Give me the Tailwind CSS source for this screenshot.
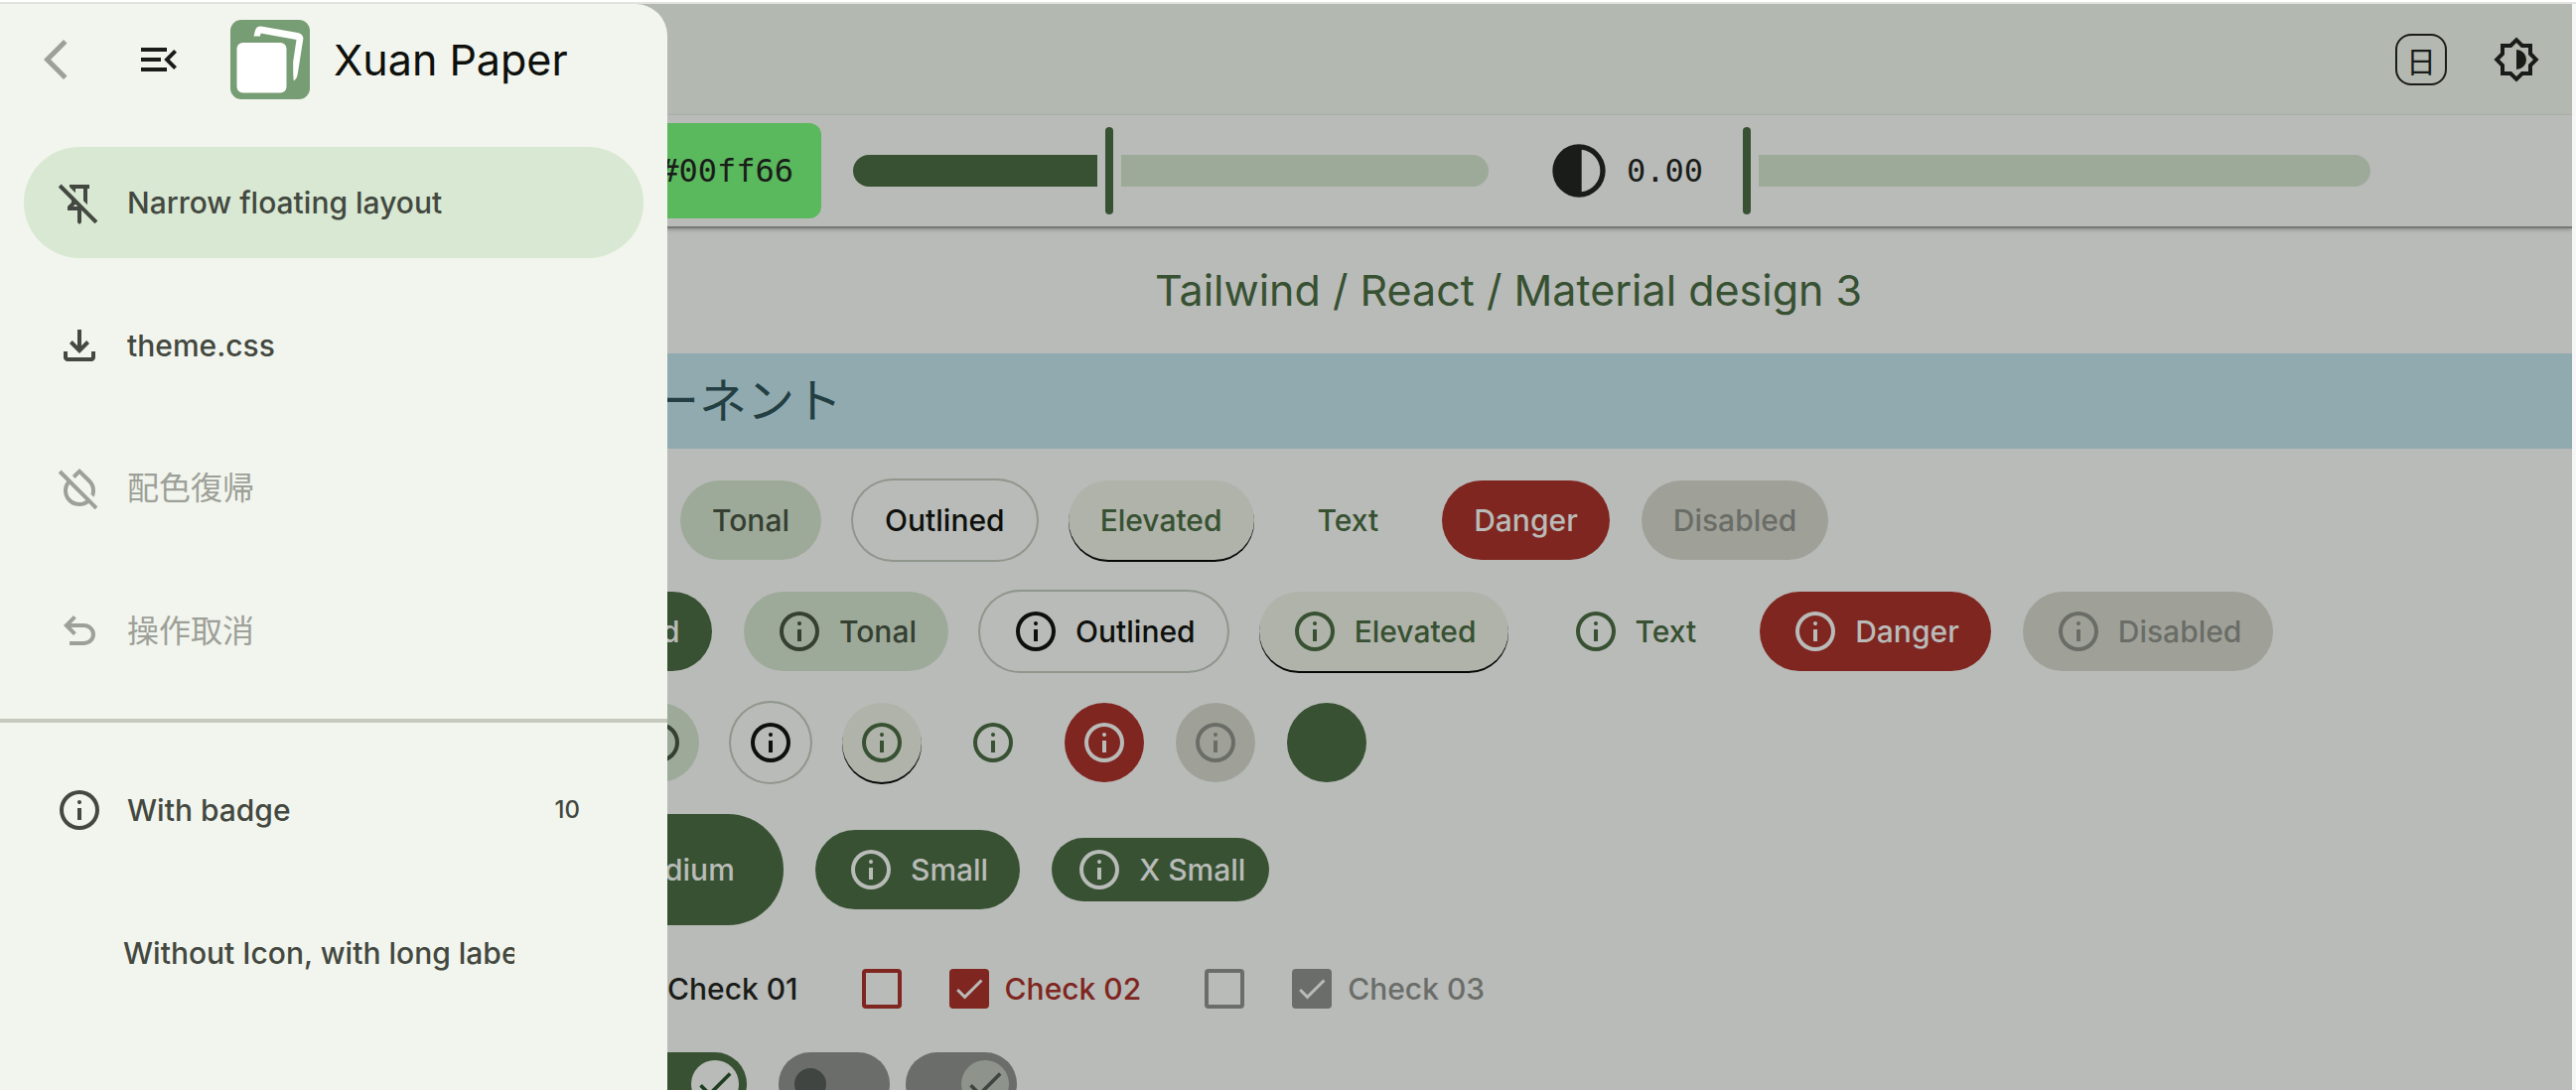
<!DOCTYPE html>
<html lang="ja">
<head>
<meta charset="utf-8">
<meta name="viewport" content="width=device-width, initial-scale=1">
<title>Xuan Paper</title>
<script src="https://cdn.jsdelivr.net/npm/@tailwindcss/browser@4"></script>
</head>
<body class="flex h-screen flex-col overflow-hidden border-t-2 border-white bg-[#b9bbb8] font-['Inter','Noto_Sans_CJK_JP',sans-serif] text-[30px] leading-10 text-[#1a1c19]">

<svg class="hidden" aria-hidden="true">
  <symbol id="info" viewBox="0 -960 960 960"><path d="M440-280h80v-240h-80v240Zm40-320q17 0 28.500-11.500T520-640q0-17-11.500-28.500T480-680q-17 0-28.500 11.500T440-640q0 17 11.500 28.500T480-600ZM480-80a400 400 0 1 1 0-800 400 400 0 0 1 0 800Zm0-80a320 320 0 1 0 0-640 320 320 0 0 0 0 640Z"/></symbol>
  <symbol id="check" viewBox="0 0 24 24"><path d="M9 16.170 4.830 12l-1.420 1.410L9 19 21 7l-1.410-1.410z"/></symbol>
</svg>

<div class="relative flex min-h-0 flex-1 flex-col border-t-2 border-[#e0e3de]">
  <div class="flex min-h-0 flex-1 flex-col overflow-hidden border-r-4 border-[#f6f7f6]">

    <header class="flex h-28 shrink-0 items-center justify-end gap-[46px] bg-[#b3b8b0] pr-8 shadow-[inset_0_-1px_0_#adb0ab]">
      <button class="flex size-[52px] items-center justify-center rounded-2xl border-2 border-[#1a1c19] font-['Noto_Sans_CJK_JP',sans-serif] text-[30px]" aria-label="言語">日</button>
      <button class="size-12" aria-label="Theme"><svg class="size-12 fill-current" viewBox="0 -960 960 960"><path d="M480-28 346-160H160v-186L28-480l132-134v-186h186l134-132 134 132h186v186l132 134-132 134v186H614L480-28Zm0-252q83 0 141.500-58.500T680-480q0-83-58.500-141.500T480-680v400Zm0 140 100-100h140v-140l100-100-100-100v-140H580L480-820 380-720H240v140L140-480l100 100v140h140l100 100Z"/></svg></button>
    </header>

    <div class="z-10 flex h-28 shrink-0 items-center pl-[512px] shadow-[0_2px_0_#777976,0_3px_4px_rgba(0,0,0,0.3)]">
      <input class="h-24 w-[315px] rounded-xl bg-[#5ab85d] pr-7 text-right font-['DejaVu_Sans_Mono',monospace] text-[32px]" type="text" value="#00ff66" aria-label="Source color">
      <input type="range" min="0" max="360" value="144" aria-label="Hue" style="--v:0.4"
        class="ml-8 h-8 w-160 min-w-0 appearance-none rounded-full bg-[linear-gradient(to_right,#375132_calc(var(--v)*(100%-24px)),transparent_0,transparent_calc(var(--v)*(100%-24px)+24px),#9eaa99_0)] [&::-webkit-slider-thumb]:h-[88px] [&::-webkit-slider-thumb]:w-6 [&::-webkit-slider-thumb]:appearance-none [&::-webkit-slider-thumb]:rounded-[12px/4px] [&::-webkit-slider-thumb]:border-x-8 [&::-webkit-slider-thumb]:border-transparent [&::-webkit-slider-thumb]:bg-[#375132] [&::-webkit-slider-thumb]:bg-clip-padding">
      <svg class="ml-[59px] size-16 shrink-0 fill-current" viewBox="0 -960 960 960" aria-hidden="true"><path d="M480-80a400 400 0 1 1 0-800 400 400 0 0 1 0 800Zm40-83q119-15 199.500-104.500T800-480q0-123-80.500-212.500T520-797v634Z"/></svg>
      <output class="ml-4 font-['DejaVu_Sans_Mono',monospace] text-[32px]">0.00</output>
      <input type="range" min="-1" max="1" value="-1" aria-label="Contrast" style="--v:0"
        class="ml-8 h-8 w-160 min-w-0 appearance-none rounded-full bg-[linear-gradient(to_right,#375132_calc(var(--v)*(100%-24px)),transparent_0,transparent_calc(var(--v)*(100%-24px)+24px),#9eaa99_0)] [&::-webkit-slider-thumb]:h-[88px] [&::-webkit-slider-thumb]:w-6 [&::-webkit-slider-thumb]:appearance-none [&::-webkit-slider-thumb]:rounded-[12px/4px] [&::-webkit-slider-thumb]:border-x-8 [&::-webkit-slider-thumb]:border-transparent [&::-webkit-slider-thumb]:bg-[#375132] [&::-webkit-slider-thumb]:bg-clip-padding">
    </div>

    <main class="min-h-0 flex-1 overflow-hidden">
      <h1 class="flex h-32 items-center justify-center pl-[448px] text-[43px] text-[#375132]">Tailwind / React / Material design 3</h1>
      <h2 class="flex h-24 items-center bg-[#91aab0] pl-[512px] text-[48px] text-[#233f43]">コンポーネント</h2>

      <div class="flex flex-col gap-8 py-8 pl-[512px]">
        <div class="flex gap-8 font-medium">
          <button class="h-20 w-[141px] rounded-full bg-[#375132] px-8 text-[#b9bbb8]">Filled</button>
          <button class="h-20 rounded-full bg-[#9eaa99] px-8 text-[#353f32]">Tonal</button>
          <button class="h-20 rounded-full px-8 text-[#0e100d] ring-2 ring-[#8f968b]">Outlined</button>
          <button class="h-20 rounded-full bg-[#b0b3aa] px-8 text-[#375132] shadow-[0_2px_0_#060806]">Elevated</button>
          <button class="h-20 rounded-full px-8 text-[#375132]">Text</button>
          <button class="h-20 rounded-full bg-[#7f2621] px-8 text-[#b9bbb8]">Danger</button>
          <button class="h-20 rounded-full bg-[#9fa198] px-8 text-[#6a6d67]" disabled>Disabled</button>
        </div>

        <div class="flex gap-8 font-medium">
          <button class="flex h-20 w-[205px] items-center gap-4 rounded-full bg-[#375132] px-8 text-[#b9bbb8]"><svg class="size-12 fill-current"><use href="#info"/></svg>Filled</button>
          <button class="flex h-20 items-center gap-4 rounded-full bg-[#9eaa99] px-8 text-[#353f32]"><svg class="size-12 fill-current"><use href="#info"/></svg>Tonal</button>
          <button class="flex h-20 items-center gap-4 rounded-full px-8 text-[#0e100d] ring-2 ring-[#8f968b]"><svg class="size-12 fill-current"><use href="#info"/></svg>Outlined</button>
          <button class="flex h-20 items-center gap-4 rounded-full bg-[#b0b3aa] px-8 text-[#375132] shadow-[0_2px_0_#060806]"><svg class="size-12 fill-current"><use href="#info"/></svg>Elevated</button>
          <button class="flex h-20 items-center gap-4 rounded-full px-8 text-[#375132]"><svg class="size-12 fill-current"><use href="#info"/></svg>Text</button>
          <button class="flex h-20 items-center gap-4 rounded-full bg-[#7f2621] px-8 text-[#b9bbb8]"><svg class="size-12 fill-current"><use href="#info"/></svg>Danger</button>
          <button class="flex h-20 items-center gap-4 rounded-full bg-[#9fa198] px-8 text-[#6a6d67]" disabled><svg class="size-12 fill-current"><use href="#info"/></svg>Disabled</button>
        </div>

        <div class="flex gap-8">
          <button aria-label="Filled" class="flex size-20 items-center justify-center rounded-full bg-[#375132] text-[#b9bbb8]"><svg class="size-12 fill-current"><use href="#info"/></svg></button>
          <button aria-label="Tonal" class="flex size-20 items-center justify-center rounded-full bg-[#9eaa99] text-[#353f32]"><svg class="size-12 fill-current"><use href="#info"/></svg></button>
          <button aria-label="Outlined" class="flex size-20 items-center justify-center rounded-full text-[#0e100d] ring-2 ring-[#8f968b]"><svg class="size-12 fill-current"><use href="#info"/></svg></button>
          <button aria-label="Elevated" class="flex size-20 items-center justify-center rounded-full bg-[#b0b3aa] text-[#375132] shadow-[0_2px_0_#060806]"><svg class="size-12 fill-current"><use href="#info"/></svg></button>
          <button aria-label="Text" class="flex size-20 items-center justify-center rounded-full text-[#375132]"><svg class="size-12 fill-current"><use href="#info"/></svg></button>
          <button aria-label="Danger" class="flex size-20 items-center justify-center rounded-full bg-[#7f2621] text-[#b9bbb8]"><svg class="size-12 fill-current"><use href="#info"/></svg></button>
          <button aria-label="Disabled" class="flex size-20 items-center justify-center rounded-full bg-[#9fa198] text-[#6a6d67]" disabled><svg class="size-12 fill-current"><use href="#info"/></svg></button>
          <button aria-label="Empty" class="size-20 rounded-full bg-[#375132]"></button>
        </div>

        <div class="flex items-center gap-8 font-medium text-[#b9bbb8]">
          <button class="flex h-28 w-[277px] items-center gap-4 rounded-full bg-[#375132] px-12"><svg class="size-12 fill-current"><use href="#info"/></svg>Medium</button>
          <button class="flex h-20 items-center gap-4 rounded-full bg-[#375132] px-8"><svg class="size-12 fill-current"><use href="#info"/></svg>Small</button>
          <button class="flex h-16 items-center gap-4 rounded-full bg-[#375132] px-6"><svg class="size-12 fill-current"><use href="#info"/></svg>X Small</button>
        </div>

        <div class="flex h-16 items-center gap-16 pl-4 font-medium">
          <div class="flex items-center gap-12 text-[#1a1c19]">
            <input type="checkbox" aria-label="Check 01 off" class="size-10 appearance-none rounded border-4 border-[#375132]">
            <label class="flex items-center gap-4">
              <span class="grid place-items-center"><input type="checkbox" checked class="col-start-1 row-start-1 size-10 appearance-none rounded bg-[#375132]"><svg class="pointer-events-none col-start-1 row-start-1 size-9 fill-[#b9bbb8]"><use href="#check"/></svg></span>Check 01
            </label>
          </div>
          <div class="flex items-center gap-12 text-[#7f2621]">
            <input type="checkbox" aria-label="Check 02 off" class="size-10 appearance-none rounded border-4 border-[#7f2621]">
            <label class="flex items-center gap-4">
              <span class="grid place-items-center"><input type="checkbox" checked class="col-start-1 row-start-1 size-10 appearance-none rounded bg-[#7f2621]"><svg class="pointer-events-none col-start-1 row-start-1 size-9 fill-[#b9bbb8]"><use href="#check"/></svg></span>Check 02
            </label>
          </div>
          <div class="flex items-center gap-12 text-[#6a6d69]">
            <input type="checkbox" disabled aria-label="Check 03 off" class="size-10 appearance-none rounded border-4 border-[#6a6d69]">
            <label class="flex items-center gap-4">
              <span class="grid place-items-center"><input type="checkbox" checked disabled class="col-start-1 row-start-1 size-10 appearance-none rounded bg-[#6a6d69]"><svg class="pointer-events-none col-start-1 row-start-1 size-9 fill-[#b9bbb8]"><use href="#check"/></svg></span>Check 03
            </label>
          </div>
        </div>

        <div class="flex gap-8">
          <div class="flex gap-4">
            <span class="grid items-center"><input type="checkbox" role="switch" aria-label="Switch off" class="col-start-1 row-start-1 h-16 w-28 appearance-none rounded-full bg-[#9eaa99]"><span class="pointer-events-none col-start-1 row-start-1 ml-4 size-8 rounded-full bg-[#6a6d69]"></span></span>
            <span class="grid items-center"><input type="checkbox" role="switch" checked aria-label="Switch on" class="col-start-1 row-start-1 h-16 w-28 appearance-none rounded-full bg-[#375132]"><span class="pointer-events-none col-start-1 row-start-1 mr-2 flex size-12 items-center justify-center justify-self-end rounded-full bg-[#b9bbb8]"><svg class="size-11 fill-[#203f22]"><use href="#check"/></svg></span></span>
          </div>
          <div class="flex gap-4">
            <span class="grid items-center"><input type="checkbox" role="switch" disabled aria-label="Disabled switch off" class="col-start-1 row-start-1 h-16 w-28 appearance-none rounded-full bg-[#6a6d69]"><span class="pointer-events-none col-start-1 row-start-1 ml-4 size-8 rounded-full bg-[#404541]"></span></span>
            <span class="grid items-center"><input type="checkbox" role="switch" checked disabled aria-label="Disabled switch on" class="col-start-1 row-start-1 h-16 w-28 appearance-none rounded-full bg-[#6a6d69]"><span class="pointer-events-none col-start-1 row-start-1 mr-2 flex size-12 items-center justify-center justify-self-end rounded-full bg-[#8e948b]"><svg class="size-11 fill-[#404541]"><use href="#check"/></svg></span></span>
          </div>
        </div>
      </div>
    </main>
  </div>

  <!-- Navigation drawer floating over the page -->
  <aside class="absolute inset-y-0 left-0 z-20 w-[672px] rounded-tr-[32px] bg-[#f2f5ed] text-[#434840]">
    <div class="flex h-28 items-center pl-11 text-[#1a1c19]">
      <button class="mr-11 text-[#9da098]" aria-label="Back"><svg class="size-12 fill-current" viewBox="0 -960 960 960"><path d="M400-80 0-480l400-400 71 71-329 329 329 329-71 71Z"/></svg></button>
      <button class="mr-12" aria-label="Close menu"><svg class="size-12 fill-current" viewBox="0 -960 960 960"><path d="M120-240v-80h520v80H120Zm664-40L584-480l200-200 56 56-144 144 144 144-56 56ZM120-440v-80h400v80H120Zm0-200v-80h520v80H120Z"/></svg></button>
      <svg class="mr-6 size-20" viewBox="0 0 80 80" aria-hidden="true">
        <rect width="80" height="80" rx="11" fill="#779d74"/>
        <path fill="#fff" d="M23.500 16.500 25 10.500Q26.500 6 31 6.500L68 13Q74 14.500 73.200 20L67.500 56Q66.500 60 64 61.500 63 60 63.200 42L66.500 20 30.500 13.500 30 16.500Z"/>
        <rect x="6.500" y="23" width="50" height="50.500" rx="6" fill="#fff"/>
      </svg>
      <span class="text-[43px] leading-[52px] text-[#0e100d]">Xuan Paper</span>
    </div>

    <nav class="font-medium">
      <div class="flex flex-col gap-8 px-6 py-8">
        <button class="flex h-28 items-center gap-6 rounded-full bg-[#d8e8d2] px-8"><svg class="size-12 fill-current" viewBox="0 -960 960 960"><path d="M680-840v80h-40v327l-80-80v-247H400v87l-87-87-33-33v-47h400ZM480-40l-40-40v-240H240v-80l80-80v-46L56-792l56-56 736 736-58 56-264-264h-6v240l-40 40ZM354-400h92l-44-44-2-2-46 46Z"/></svg>Narrow floating layout</button>
        <button class="flex h-28 items-center gap-6 rounded-full px-8"><svg class="size-12 fill-current" viewBox="0 -960 960 960"><path d="M480-320 280-520l56-58 104 104v-326h80v326l104-104 56 58-200 200ZM240-160q-33 0-56.500-23.500T160-240v-120h80v120h480v-120h80v120q0 33-23.500 56.500T720-160H240Z"/></svg>theme.css</button>
        <button class="flex h-28 items-center gap-6 rounded-full px-8 text-[32px] font-normal text-[#9da098]" disabled><svg class="size-12 fill-current" viewBox="0 -960 960 960"><path d="M800-436q0 36-8 69t-22 63l-62-60q6-17 9-34.500t3-37.500q0-47-17.500-89T650-600L480-768l-88 86-56-56 144-142 226 222q44 42 69 99.500T800-436Zm-8 380L668-180q-41 29-88 44.500T480-120q-133 0-226.500-92.500T160-436q0-51 16-98t48-90L56-792l56-56 736 736-56 56ZM480-200q36 0 68.500-10t61.500-28L280-566q-21 32-30.500 64t-9.500 66q0 98 70 167t170 69Z"/></svg>配色復帰</button>
        <button class="flex h-28 items-center gap-6 rounded-full px-8 text-[32px] font-normal text-[#9da098]" disabled><svg class="size-12 fill-current" viewBox="0 -960 960 960"><path d="M280-200v-80h284q63 0 109.500-40T720-420q0-60-46.500-100T564-560H312l104 104-56 56-200-200 200-200 56 56-104 104h252q97 0 166.500 63T800-420q0 94-69.500 157T564-200H280Z"/></svg>操作取消</button>
      </div>
      <hr class="border-t-4 border-[#c5cabf]">
      <div class="flex flex-col gap-8 px-6 py-8">
        <button class="flex h-28 items-center gap-6 rounded-full px-8 text-left"><svg class="size-12 fill-current"><use href="#info"/></svg><span class="flex-1">With badge</span><span class="pr-8 text-2xl">10</span></button>
        <button class="flex h-28 items-center rounded-full pl-[100px] text-left"><span class="w-[394px] overflow-hidden whitespace-nowrap">Without Icon, with long label</span></button>
      </div>
    </nav>
  </aside>
</div>
</body>
</html>
